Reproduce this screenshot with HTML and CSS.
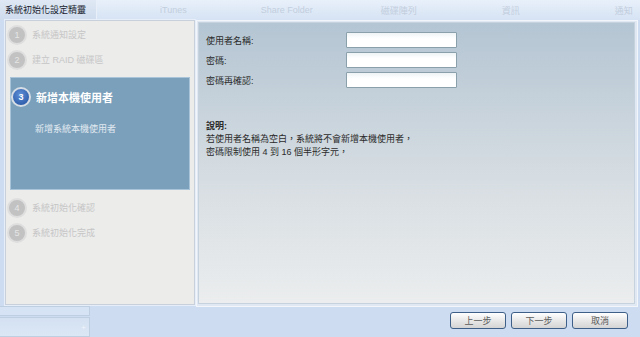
FILE: index.html
```html
<!DOCTYPE html>
<html lang="zh-Hant">
<head>
  <meta charset="UTF-8">
  <title>系統初始化設定精靈</title>
  <link rel="stylesheet" href="styles.css">
</head>
<body>
  <div id="wizard">
    <div class="tabbar">
      <div class="title-tab">系統初始化設定精靈</div>
      <div class="tab t-itunes">iTunes</div>
      <div class="tab t-share">Share Folder</div>
      <div class="tab t-raid">磁碟陣列</div>
      <div class="tab t-info">資訊</div>
      <div class="tab t-notify">通知</div>
    </div>

    <div class="main">
      <div class="steps">
        <div class="step"><span class="num">1</span>系統通知設定</div>
        <div class="step"><span class="num">2</span>建立 RAID 磁碟區</div>
        <div class="step-active">
          <div class="active-head"><span class="num">3</span>新增本機使用者</div>
          <div class="active-desc">新增系統本機使用者</div>
        </div>
        <div class="step"><span class="num">4</span>系統初始化確認</div>
        <div class="step"><span class="num">5</span>系統初始化完成</div>
      </div>

      <div class="content">
        <div class="content-inner">
          <div class="form-row">
            <label>使用者名稱:</label>
            <input type="text">
          </div>
          <div class="form-row">
            <label>密碼:</label>
            <input type="password">
          </div>
          <div class="form-row">
            <label>密碼再確認:</label>
            <input type="password">
          </div>

          <div class="note">
            <div class="note-title">說明:</div>
            <div>若使用者名稱為空白，系統將不會新增本機使用者，</div>
            <div>密碼限制使用 4 到 16 個半形字元，</div>
          </div>
        </div>
      </div>
    </div>

    <div class="footer">
      <div class="ghost">
        <div class="ghost-top"></div>
        <div class="ghost-bottom"><span>+</span></div>
      </div>
      <div class="buttons">
        <button class="btn">上一步</button>
        <button class="btn">下一步</button>
        <button class="btn">取消</button>
      </div>
    </div>
  </div>
</body>
</html>
```

FILE: styles.css
```css
body {
  margin: 0;
  background: #cddcf0;
  font-family: "Liberation Sans", "Noto Sans CJK TC", sans-serif;
  overflow: hidden;
}

#wizard {
  width: 640px;
  height: 337px;
  display: flex;
  flex-direction: column;
  background: #cddcf0;
}

/* top tab strip */
.tabbar {
  height: 20px;
  display: flex;
  align-items: center;
  background: linear-gradient(#e8f0fa, #d6e3f4);
  font-size: 9px;
  color: #c2cedd;
}

.title-tab {
  width: 91px;
  height: 20px;
  line-height: 20px;
  padding-left: 5px;
  background: linear-gradient(#dfe8f4, #cfdcee);
  border-right: 1px solid #e8eff8;
  color: #18222e;
  font-size: 9px;
}

.tab {
  white-space: nowrap;
}

.t-itunes { margin-left: 63px; }
.t-share { margin-left: 74px; }
.t-raid { margin-left: 68px; }
.t-info { margin-left: 85px; }
.t-notify { margin-left: 95px; }

/* main area */
.main {
  height: 284px;
  display: flex;
  padding-left: 5px;
}

.steps {
  width: 188px;
  height: 282px;
  background: #ececeb;
  border: 1px solid #c7d0db;
  box-shadow: 0 0 0 1px #e6eef9;
  display: flex;
  flex-direction: column;
  padding-top: 1px;
}

.step {
  height: 25px;
  display: flex;
  align-items: center;
  padding-left: 1px;
  font-size: 9px;
  color: #c6c6c6;
}

.step .num {
  width: 16px;
  height: 16px;
  border-radius: 50%;
  background: #c2c2c2;
  border: 2px solid #dedede;
  color: #e6e6e6;
  font-size: 9px;
  display: flex;
  align-items: center;
  justify-content: center;
  margin-right: 5px;
}

.step-active {
  margin: 5px 4px 5px 4px;
  height: 113px;
  background: #7aa0bb;
  border: 1px solid #a9c3d8;
  box-sizing: border-box;
  padding: 9px 0 0 0;
  color: #fff;
}

.active-head {
  display: flex;
  align-items: center;
  font-size: 11px;
  font-weight: bold;
}

.active-head .num {
  width: 16px;
  height: 16px;
  border-radius: 50%;
  background: radial-gradient(circle at 45% 35%, #5f8fd6, #1f4f9e);
  border: 2px solid #d6dde4;
  color: #fff;
  font-size: 9px;
  display: flex;
  align-items: center;
  justify-content: center;
  margin-right: 5px;
}

.active-desc {
  margin: 15px 0 0 24px;
  font-size: 9px;
  color: #e2eaf1;
}

.content {
  width: 437px;
  height: 282px;
  margin-left: 1px;
  border: 1px solid #f2f6fb;
  padding: 1px 2px 2px 1px;
  background: #dfe8f3;
}

.content-inner {
  height: 100%;
  box-sizing: border-box;
  background: linear-gradient(#b4c5d3, #d6dde2 55%, #ebedee);
  border: 1px solid #c6d2dd;
  padding: 7px 0 0 7px;
  font-size: 9px;
  color: #2b2b2b;
}

.form-row {
  height: 20px;
  display: flex;
  align-items: center;
}

.form-row label {
  width: 140px;
}

.form-row input {
  width: 111px;
  height: 16px;
  box-sizing: border-box;
  border: 1px solid #8aa0ab;
  border-radius: 1px;
  background: linear-gradient(#eef3f5, #fff 40%);
  padding: 0 3px;
  outline: none;
}

.note {
  margin-top: 30px;
  line-height: 13px;
}

.note-title {
  font-weight: bold;
}

/* bottom bar */
.footer {
  height: 33px;
  display: flex;
  align-items: flex-start;
  justify-content: space-between;
}

.ghost {
  width: 90px;
  height: 31px;
  align-self: flex-end;
  display: flex;
  flex-direction: column;
}

.ghost-top {
  height: 8px;
  border: 1px solid #bfcfe2;
  border-left: none;
  background: #d6e3f4;
}

.ghost-bottom {
  flex: 1;
  margin-top: 1px;
  border: 1px solid #bfcfe2;
  border-left: none;
  background: linear-gradient(#d4e1f2, #dce7f5);
  display: flex;
  justify-content: flex-end;
  align-items: center;
  padding-right: 3px;
  font-size: 8px;
  color: #f0f4fa;
}

.buttons {
  display: flex;
  gap: 5px;
  padding-right: 12px;
  padding-top: 8px;
}

.btn {
  width: 56px;
  height: 17px;
  border: 1px solid #3d5f88;
  border-radius: 3px;
  background: linear-gradient(#ffffff, #e4e4e4 60%, #d4d4d4);
  font-family: "Liberation Sans", "Noto Sans CJK TC", sans-serif;
  font-size: 9px;
  color: #5c5c5c;
  padding: 0;
  cursor: pointer;
}
```
